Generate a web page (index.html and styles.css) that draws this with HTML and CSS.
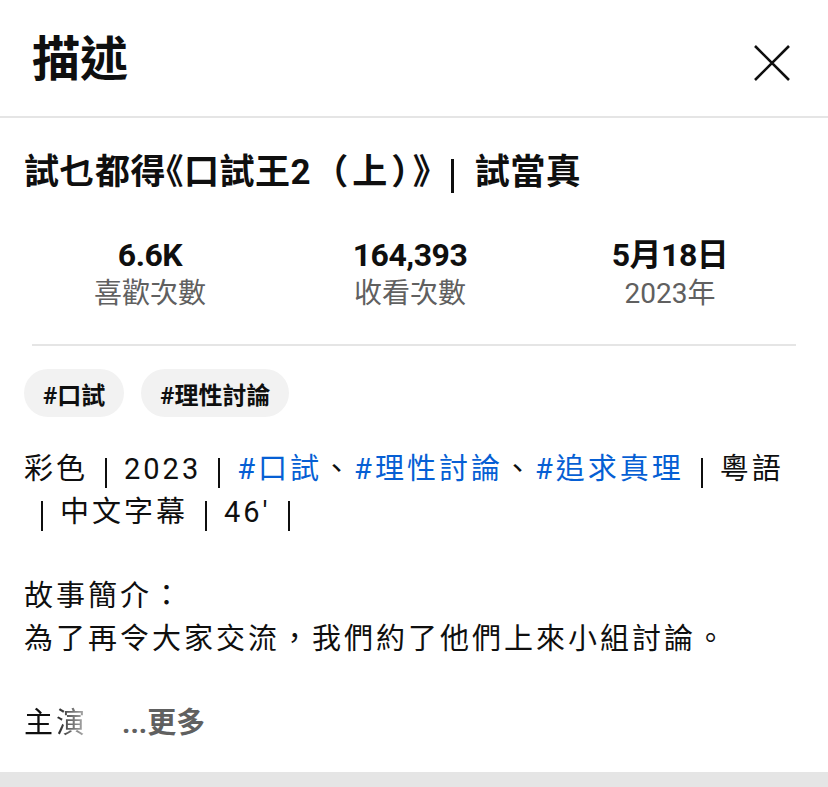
FILE: index.html
```html
<!DOCTYPE html>
<html lang="zh-Hant">
<head>
    <meta charset="UTF-8" />
    <meta name="viewport" content="width=device-width, initial-scale=1.0" />
    <title>描述</title>
    <link rel="stylesheet" href="styles.css">
</head>
<body>
    <div id="panel">
        <div id="header">
            <div class="heading">描述</div>
            <button class="close" aria-label="關閉">
                <svg viewBox="0 0 36 36" width="36" height="36">
                    <path d="M1 1 L35 35 M35 1 L1 35" stroke="#0f0f0f" stroke-width="2.6" fill="none" />
                </svg>
            </button>
        </div>

        <div id="content">
            <div class="title">試乜都得<span class="half">《</span>口試王2<span class="paren">（上）</span><span class="half">》</span><span class="bar">｜</span>試當真</div>

            <div id="stats">
                <div class="stat">
                    <div class="num">6.6K</div>
                    <div class="label">喜歡次數</div>
                </div>
                <div class="stat">
                    <div class="num">164,393</div>
                    <div class="label">收看次數</div>
                </div>
                <div class="stat">
                    <div class="num">5月18日</div>
                    <div class="label">2023年</div>
                </div>
            </div>

            <hr />

            <div id="tags">
                <span class="chip">#口試</span>
                <span class="chip">#理性討論</span>
            </div>

            <div id="desc">
                <p>彩色<span class="sep">｜</span>2023<span class="sep">｜</span><a href="#">#口試</a>、<a href="#">#理性討論</a>、<a href="#">#追求真理</a><span class="sep">｜</span>粵語<span class="sep">｜</span>中文字幕<span class="sep">｜</span>46'<span class="sep">｜</span></p>
                <p>故事簡介：<br>為了再令大家交流，我們約了他們上來小組討論。</p>
                <p class="cast"><span class="fade">主演：</span><span class="more">...更多</span></p>
            </div>
        </div>

        <div id="footer"></div>
    </div>
</body>
</html>
```

FILE: styles.css
```css
body {
    margin: 0;
    padding: 0;
    background: white;
    color: #0f0f0f;
    font-family: Roboto, "Noto Sans CJK TC", sans-serif;
}

#panel {
    width: 828px;
    height: 787px;
    display: flex;
    flex-direction: column;
    overflow: hidden;
}

#header {
    height: 116px;
    display: flex;
    align-items: center;
    justify-content: space-between;
    padding: 0 38px 0 32px;
    border-bottom: 2px solid #e5e5e5;
    flex-shrink: 0;
}

.heading {
    font-size: 48px;
    font-weight: 700;
    line-height: 56px;
    padding-top: 4px;
}

.close {
    border: none;
    background: none;
    padding: 0;
    margin-top: 10px;
    width: 36px;
    height: 36px;
}

#content {
    flex: 1;
    min-height: 0;
    padding: 0 0 0 24px;
}

.title {
    font-size: 35px;
    font-weight: 700;
    line-height: 48px;
    letter-spacing: 0.5px;
    margin-top: 31px;
}

.title .half {
    font-feature-settings: "halt";
}

.title .paren {
    letter-spacing: 4px;
    margin-left: 2px;
}

/* bars drawn as a line so they keep the weight of the reference */
.title .bar,
.sep {
    display: inline-block;
    text-align: center;
    letter-spacing: 0;
    color: transparent;
    background: linear-gradient(#0f0f0f, #0f0f0f) center / 2px 100% no-repeat;
}

.title .bar {
    width: 44px;
    height: 34px;
    line-height: 34px;
    vertical-align: -3px;
    background-size: 3px 100%;
}

#stats {
    display: grid;
    grid-template-columns: 1fr 1fr 1fr;
    margin: 40px 28px 0 -4px;
    text-align: center;
}

.num {
    font-size: 32px;
    font-weight: 700;
    line-height: 36px;
    letter-spacing: -0.5px;
}

.label {
    font-size: 28px;
    line-height: 42px;
    color: #606060;
}

hr {
    border: none;
    border-top: 2px solid #e5e5e5;
    margin: 29px 32px 0 8px;
}

#tags {
    display: flex;
    gap: 17px;
    margin-top: 23px;
}

.chip {
    height: 48px;
    display: flex;
    align-items: center;
    padding: 0 19px;
    border-radius: 24px;
    background: #f2f2f2;
    font-size: 24px;
    font-weight: 700;
}

#desc {
    margin-top: 31px;
    padding-right: 20px;
    font-size: 29px;
    line-height: 42.5px;
    letter-spacing: 3px;
}

#desc p {
    margin: 0 0 42px 0;
}

#desc p.cast {
    margin: 0;
}

#desc a {
    color: #065fd4;
    text-decoration: none;
}

.sep {
    width: 36px;
    height: 30px;
    line-height: 30px;
    vertical-align: -4px;
}

.cast {
    white-space: nowrap;
}

.fade {
    background: linear-gradient(to right, #0f0f0f 30%, #ffffff 80%);
    -webkit-background-clip: text;
    background-clip: text;
    color: transparent;
}

.more {
    color: #606060;
    font-weight: 700;
    letter-spacing: 0;
    margin-left: 2px;
}

#footer {
    height: 15px;
    background: #e5e5e5;
    flex-shrink: 0;
}
```
